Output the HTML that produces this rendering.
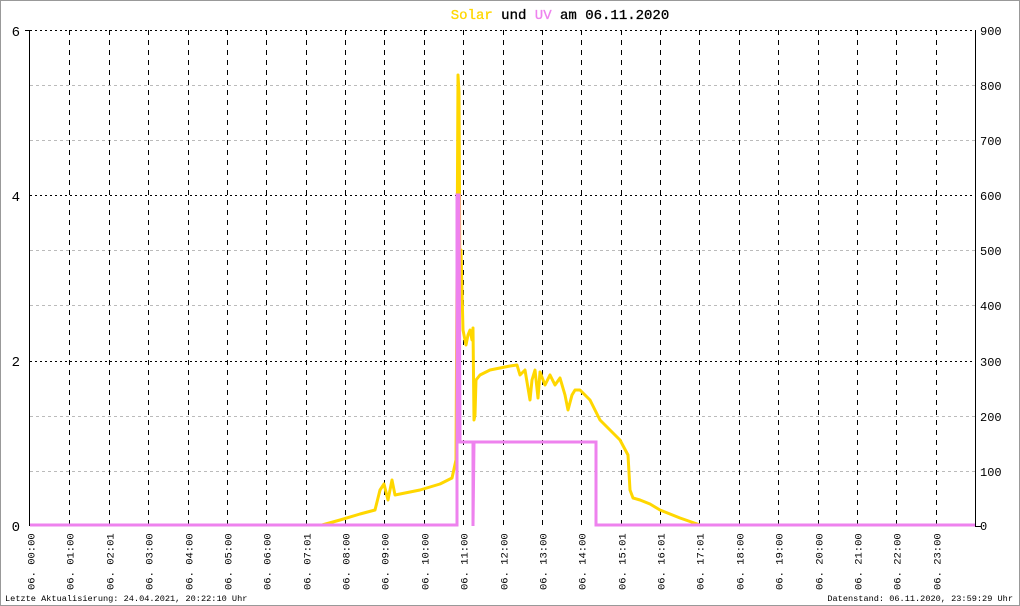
<!DOCTYPE html>
<html><head><meta charset="utf-8"><style>
html,body{margin:0;padding:0;background:#fff}
svg{display:block}
text{font-family:"Liberation Mono","DejaVu Sans Mono",monospace}
</style></head><body>
<svg width="1020" height="606" viewBox="0 0 1020 606" xmlns="http://www.w3.org/2000/svg">
<rect x="0.5" y="0.5" width="1019" height="605" fill="#fff" stroke="#999"/>
<text x="560" y="19" font-size="14" text-anchor="middle" stroke="#000" stroke-width="0.3"><tspan fill="#FFD700" stroke="#FFD700">Solar</tspan> und <tspan fill="#EE82EE" stroke="#EE82EE">UV</tspan> am 06.11.2020</text>
<g stroke="#bbb" stroke-dasharray="3,3" stroke-width="1">
<line x1="30" y1="85.5" x2="975" y2="85.5"/><line x1="30" y1="140.5" x2="975" y2="140.5"/>
<line x1="30" y1="250.5" x2="975" y2="250.5"/><line x1="30" y1="305.5" x2="975" y2="305.5"/>
<line x1="30" y1="416.5" x2="975" y2="416.5"/><line x1="30" y1="471.5" x2="975" y2="471.5"/>
</g>
<g stroke="#000" stroke-dasharray="2,3" stroke-width="1">
<line x1="30" y1="30.5" x2="975" y2="30.5"/><line x1="30" y1="195.5" x2="975" y2="195.5"/><line x1="30" y1="361.5" x2="975" y2="361.5"/>
</g>
<g stroke="#000" stroke-dasharray="5,5" stroke-width="1" id="v"></g>
<line x1="29.5" y1="30" x2="29.5" y2="526" stroke="#000"/>
<line x1="975.5" y1="30" x2="975.5" y2="526" stroke="#000"/>
<line x1="25" y1="30.5" x2="30" y2="30.5" stroke="#000"/>
<line x1="975" y1="526.5" x2="981" y2="526.5" stroke="#000"/>
<g font-size="14" fill="#000" text-anchor="end">
<text x="20" y="36">6</text><text x="20" y="201">4</text><text x="20" y="366">2</text><text x="20" y="531">0</text>
</g>
<g font-size="12" fill="#000">
<text x="980" y="35">900</text><text x="980" y="90">800</text><text x="980" y="145">700</text><text x="980" y="200">600</text><text x="980" y="255">500</text><text x="980" y="310">400</text><text x="980" y="366">300</text><text x="980" y="421">200</text><text x="980" y="476">100</text><text x="980" y="530">0</text>
</g>
<polyline fill="none" stroke="#FFD700" stroke-width="3" stroke-linejoin="round" points="30,525 322,525 340,520 360,514 375,510 380,490 384,484 388,500 390,490 392,480 395,495 420,490 440,484 452,478 456,460 457,270 458,75 459,92 460,300 461,250 463,330 466,345 468,335 470,330 472,340 473,328 474,420 475,415 476,380 480,375 490,370 510,366 517,365 520,375 525,370 530,400 532,380 535,370 538,398 540,372 545,385 550,375 555,385 560,378 565,395 568,410 572,395 575,390 580,390 590,400 600,420 610,430 620,440 628,455 630,490 633,498 640,500 650,504 660,510 680,518 700,525 975,525"/>
<polyline fill="none" stroke="#EE82EE" stroke-width="3" points="30,525 457,525 457,195 459,195 460,442 473,442 473,526 474,442 596,442 596,525 975,525"/>
<g font-size="10.5" fill="#000" id="xl"></g>
<text x="5" y="601" font-size="8.6">Letzte Aktualisierung: 24.04.2021, 20:22:10 Uhr</text>
<text x="1013" y="601" font-size="8.6" text-anchor="end">Datenstand: 06.11.2020, 23:59:29 Uhr</text>
</svg>
<script>
var ns="http://www.w3.org/2000/svg",v=document.getElementById("v"),xl=document.getElementById("xl");
var t=["00:00","01:00","02:01","03:00","04:00","05:00","06:00","07:01","08:00","09:00","10:00","11:00","12:00","13:00","14:00","15:01","16:01","17:01","18:00","19:00","20:00","21:00","22:00","23:00"];
for(var i=0;i<24;i++){var x=Math.round(30+i*39.375)+0.5;
if(i>0){var l=document.createElementNS(ns,"line");l.setAttribute("x1",x);l.setAttribute("x2",x);l.setAttribute("y1",30);l.setAttribute("y2",526);v.appendChild(l);}
var tx=document.createElementNS(ns,"text");tx.setAttribute("transform","translate("+(x+4)+",590) rotate(-90)");tx.textContent="06. "+t[i];xl.appendChild(tx);}
</script>
</body></html>
